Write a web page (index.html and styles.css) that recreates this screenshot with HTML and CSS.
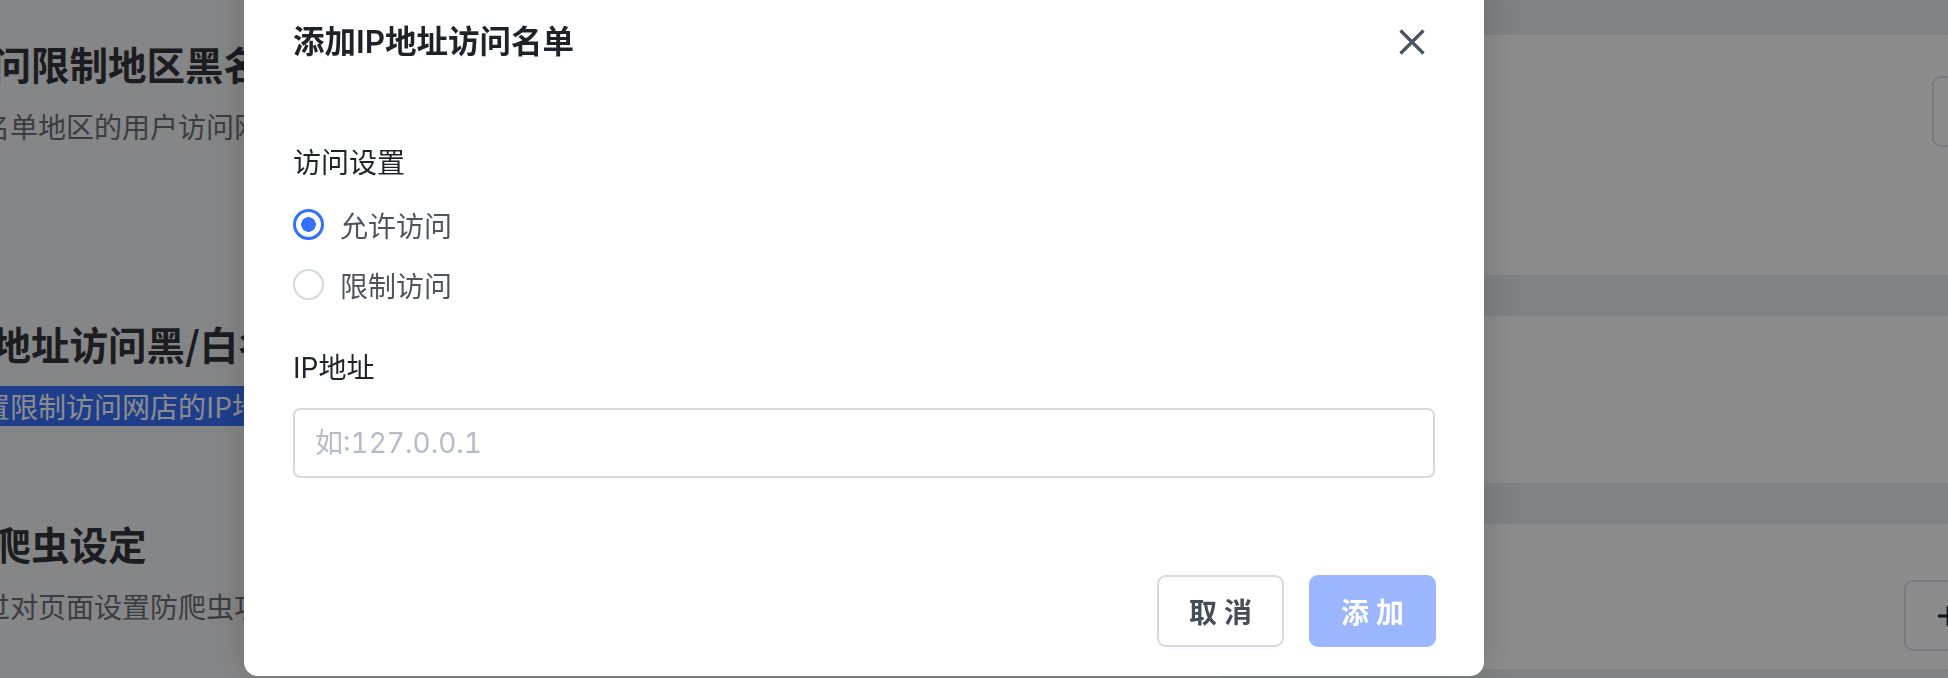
FILE: index.html
```html
<!DOCTYPE html>
<html lang="zh-CN">
<head>
    <meta charset="UTF-8">
    <meta name="viewport" content="width=device-width, initial-scale=1.0">
    <title>访问限制设置</title>
    <link rel="stylesheet" href="styles.css">
</head>
<body>
    <div class="page">
        <div class="intro">
            <section class="intro-block intro-block-tall">
                <h2 class="intro-title">访问限制地区黑名单</h2>
                <p class="intro-desc">黑名单地区的用户访问网店时将被拦截</p>
            </section>
            <section class="intro-block">
                <h2 class="intro-title">IP地址访问黑/白名单</h2>
                <p class="intro-desc"><span class="selected">设置限制访问网店的IP地址黑白名单</span></p>
            </section>
            <section class="intro-block">
                <h2 class="intro-title">防爬虫设定</h2>
                <p class="intro-desc">通过对页面设置防爬虫功能保护网店数据</p>
            </section>
        </div>
        <div class="cards">
            <div class="card card-regions">
                <button class="ghost-btn">编辑</button>
            </div>
            <div class="card card-ip"></div>
            <div class="card card-crawler">
                <button class="ghost-btn ghost-btn-icon">
                    <svg class="plus" width="24" height="24" viewBox="0 0 24 24"><path d="M2 12H22M12 2V22"/></svg>
                    添加
                </button>
            </div>
        </div>
    </div>

    <div class="mask"></div>

    <div class="modal">
        <div class="modal-header">
            <h3 class="modal-title">添加IP地址访问名单</h3>
            <button class="modal-close" aria-label="关闭">
                <svg width="26" height="26" viewBox="0 0 26 26"><path d="M1.5 1.5L24.5 24.5M24.5 1.5L1.5 24.5"/></svg>
            </button>
        </div>
        <div class="modal-body">
            <div class="field-label">访问设置</div>
            <div class="radio-group">
                <label class="radio"><input type="radio" name="mode" checked>允许访问</label>
                <label class="radio"><input type="radio" name="mode">限制访问</label>
            </div>
            <div class="field-label field-label-ip">IP地址</div>
            <input class="ip-input" type="text" placeholder="如:127.0.0.1">
        </div>
        <div class="modal-footer">
            <button class="btn btn-cancel">取 消</button>
            <button class="btn btn-primary" disabled>添 加</button>
        </div>
    </div>
</body>
</html>
```

FILE: styles.css
```css
body {
    margin: 0;
    font-family: "Noto Sans CJK SC", sans-serif;
    overflow: hidden;
    height: 678px;
}
.page {
    display: grid;
    grid-template-columns: 1300px 1fr;
    width: 2170px;
    height: 678px;
    margin-left: -80px;
}
.intro {
    background: #f3f4f6;
    padding: 35.5px 0 0 34px;
}
.intro-block {
    min-height: 200px;
}
.intro-block-tall {
    min-height: 280.3px;
}
.intro-title {
    margin: 0;
    font-size: 38.5px;
    line-height: 54px;
    font-weight: 700;
    color: #33353b;
    white-space: nowrap;
}
.intro-desc {
    margin: 16px 0 0;
    font-size: 28px;
    line-height: 40.5px;
    color: #6c6f79;
    white-space: nowrap;
}
.selected {
    background: #3872ff;
    color: #fff;
}
.cards {
    background: #e9ebee;
    padding-top: 35px;
    display: flex;
    flex-direction: column;
    gap: 41px;
}
.card {
    background: #fff;
    display: flex;
    justify-content: flex-end;
    align-items: flex-start;
    padding-right: 32px;
    box-sizing: border-box;
}
.card-regions {
    height: 240px;
    padding-top: 41px;
}
.card-ip {
    height: 167px;
}
.card-crawler {
    height: 144.5px;
    padding-top: 56px;
}
.ghost-btn {
    height: 71px;
    padding: 0 33px;
    border: 2px solid #dde0ea;
    border-radius: 9px;
    background: #fff;
    font-family: inherit;
    font-size: 28px;
    color: #1f2329;
    display: flex;
    align-items: center;
    gap: 10px;
}
.ghost-btn-icon {
    padding: 0 30px;
}
.plus {
    fill: none;
    stroke: #1f2329;
    stroke-width: 2.8;
}

.mask {
    position: fixed;
    inset: 0;
    background: rgba(0, 0, 0, 0.45);
}
.modal {
    position: fixed;
    left: 244px;
    top: -24px;
    width: 1240px;
    box-sizing: border-box;
    background: #fff;
    border-radius: 14px;
    box-shadow: 0 0 40px rgba(0, 0, 0, 0.18);
    font-family: Inter, "Noto Sans CJK SC", sans-serif;
    padding-bottom: 29px;
}
.modal-header {
    display: flex;
    align-items: center;
    justify-content: space-between;
    padding: 44px 59px 0 49px;
}
.modal-title {
    margin: 0;
    font-size: 31.5px;
    line-height: 44px;
    font-weight: 600;
    color: #1f2329;
}
.modal-close {
    border: 0;
    padding: 0;
    background: none;
    display: flex;
}
.modal-close svg {
    fill: none;
    stroke: #4b5262;
    stroke-width: 3.2;
}
.modal-body {
    padding: 0 49px;
}
.field-label {
    margin-top: 79px;
    font-size: 28px;
    line-height: 40px;
    color: #1f2329;
}
.field-label-ip {
    margin-top: 43.4px;
}
.radio-group {
    margin-top: 21.6px;
    display: flex;
    flex-direction: column;
    gap: 20px;
}
.radio {
    display: flex;
    align-items: center;
    gap: 16px;
    height: 40px;
    font-size: 28px;
    color: #4f5460;
}
.radio input {
    appearance: none;
    margin: 0;
    width: 31px;
    height: 31px;
    border: 2.5px solid #d3d7e1;
    border-radius: 50%;
    box-sizing: border-box;
    background: #fff;
}
.radio input:checked {
    border: 3px solid #3370ff;
    background: radial-gradient(circle, #3370ff 0 7px, #fff 7.6px);
}
.ip-input {
    display: block;
    width: 100%;
    height: 70px;
    margin-top: 19.6px;
    box-sizing: border-box;
    border: 2px solid #d6d9e4;
    border-radius: 7px;
    padding: 0 20px;
    font-family: inherit;
    font-size: 28px;
    font-variant-numeric: tabular-nums;
    color: #1f2329;
}
.ip-input::placeholder {
    color: #b6bbc9;
}
.modal-footer {
    display: flex;
    justify-content: flex-end;
    gap: 25px;
    margin-top: 97px;
    padding: 0 48px;
}
.btn {
    height: 72px;
    padding: 0 30px;
    border: 2px solid #d6d9e4;
    border-radius: 9px;
    background: #fff;
    font-family: inherit;
    font-size: 28px;
    font-weight: 600;
    color: #474c59;
    box-shadow: 0 2px 0 rgba(0, 0, 0, 0.02);
}
.btn-primary {
    border-color: #9cb7ff;
    background: #9cb7ff;
    color: #fff;
    box-shadow: none;
}
```
